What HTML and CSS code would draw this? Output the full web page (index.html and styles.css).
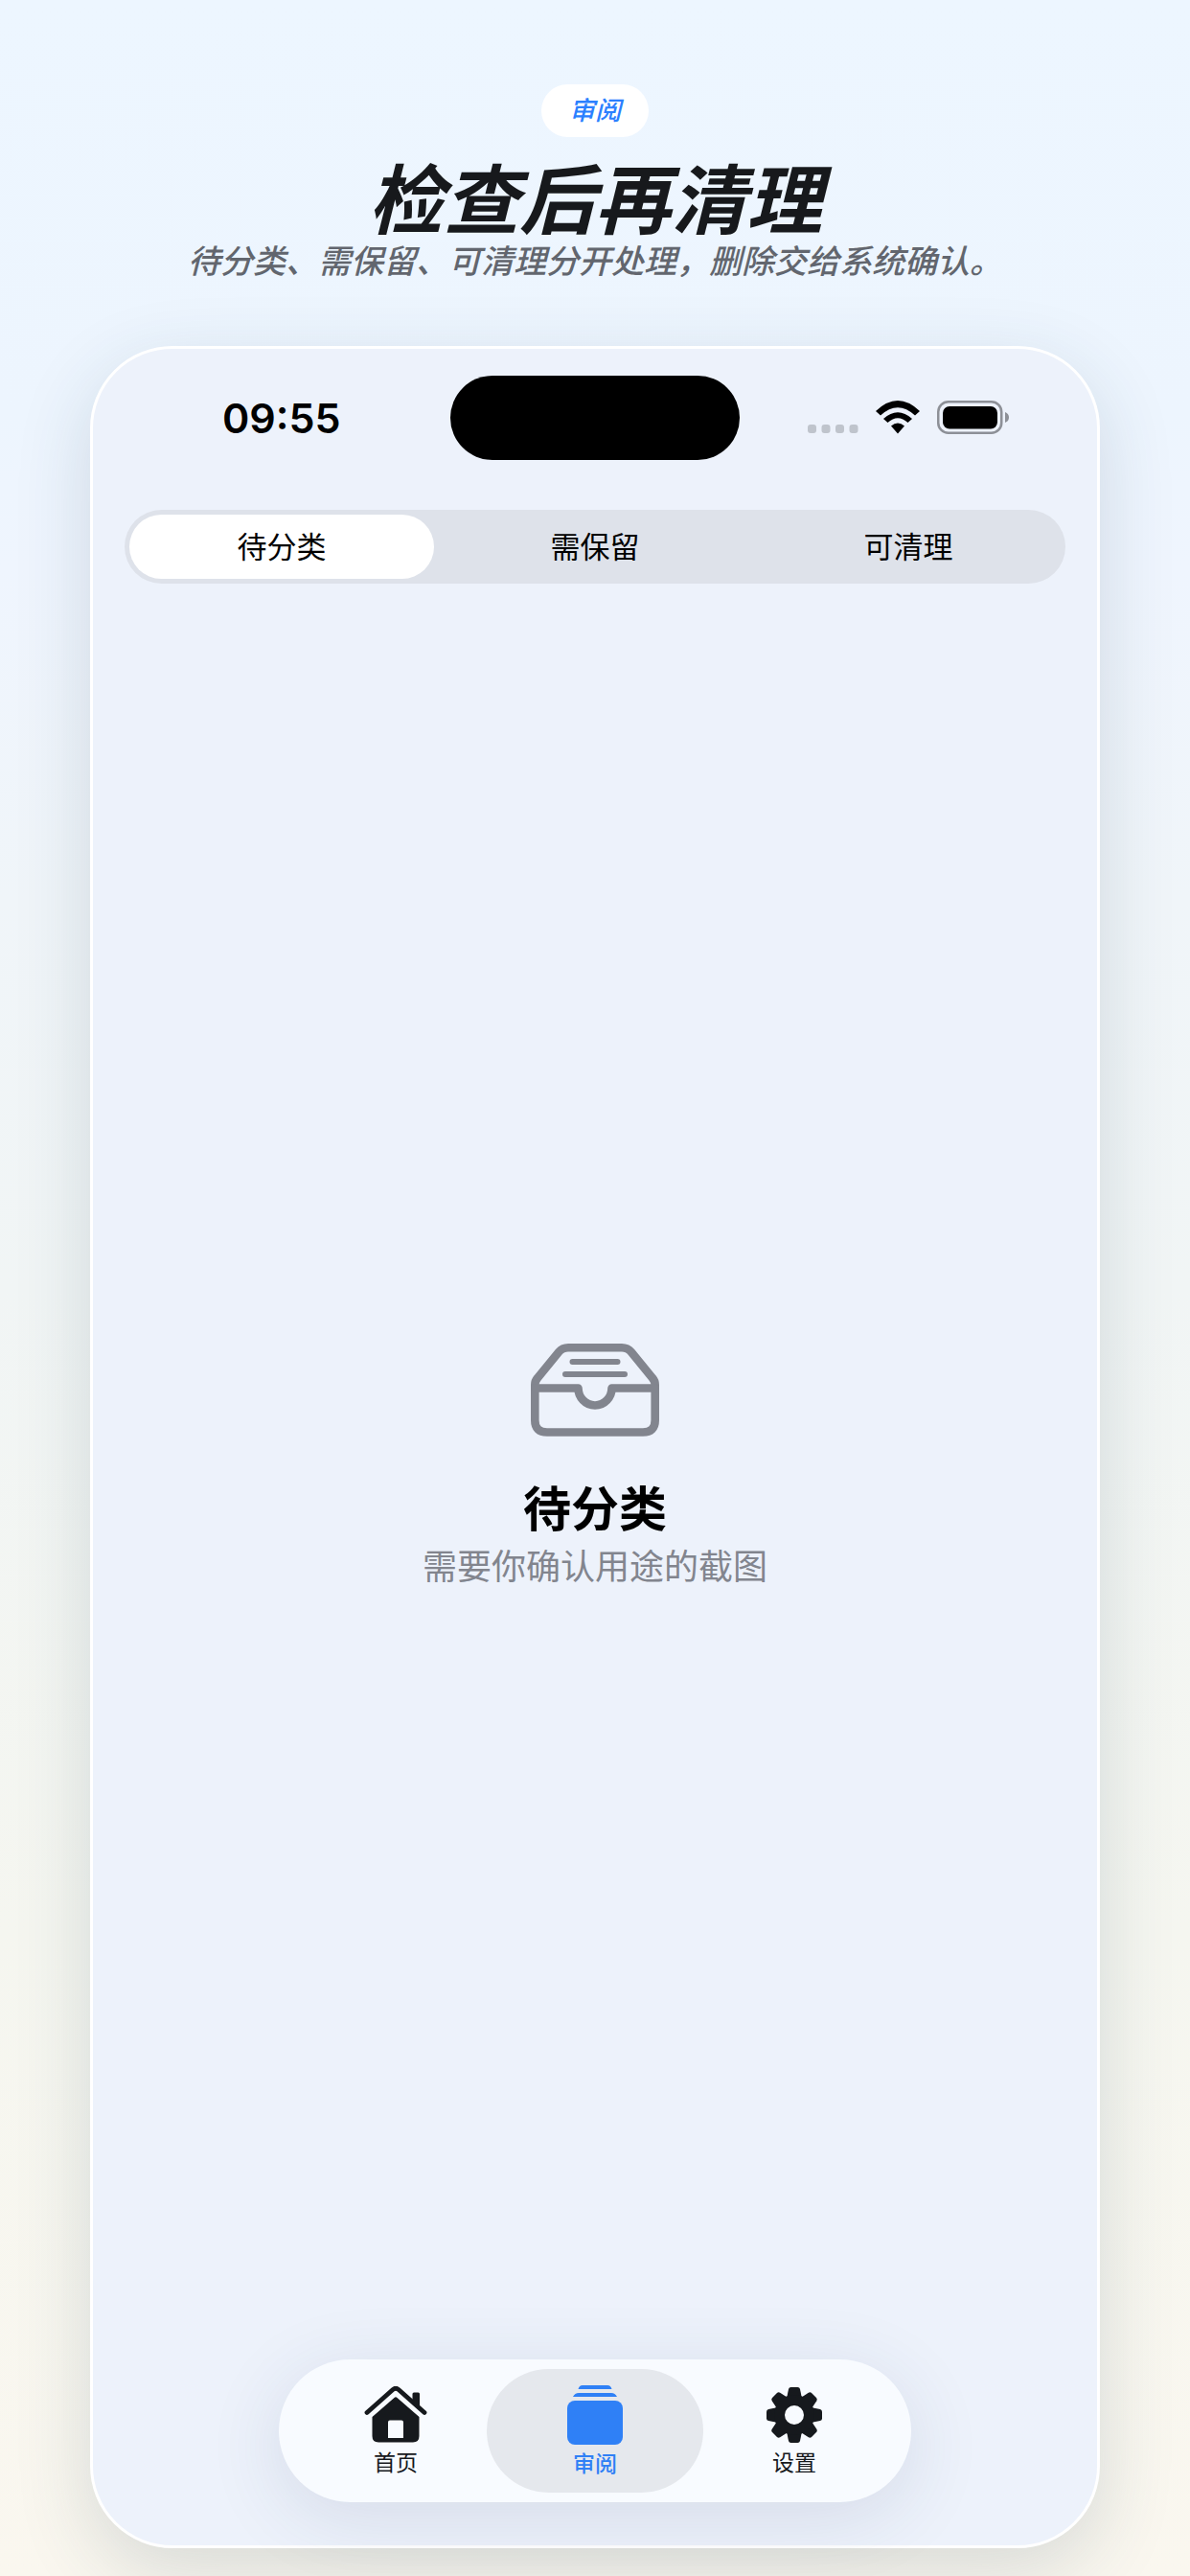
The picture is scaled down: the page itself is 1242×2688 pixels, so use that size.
FILE: index.html
```html
<!DOCTYPE html>
<html lang="zh-CN">
<head>
<meta charset="utf-8">
<title>审阅</title>
<meta name="viewport" content="width=device-width, initial-scale=1">
<link rel="stylesheet" href="styles.css">
</head>
<body>
<main class="page">
  <header class="hero">
    <span class="badge">审阅</span>
    <h1 class="headline">检查后再清理</h1>
    <p class="tagline">待分类、需保留、可清理分开处理，删除交给系统确认。</p>
  </header>
  <section class="phone">
    <div class="status">
      <time class="clock">09:55</time>
      <div class="island"></div>
      <div class="indicators">
        <svg width="54" height="36" viewBox="0 0 54 36" fill="#bfc4cc"><rect y="25" width="9" height="9" rx="3"/><rect x="14.500" y="25" width="9" height="9" rx="3"/><rect x="29" y="25" width="9" height="9" rx="3"/><rect x="43.500" y="25" width="9" height="9" rx="3"/></svg>
        <svg class="wifi" width="46" height="36" viewBox="0 0 46 36"><path d="M0 11Q23-11 46 11L41 15.500Q23-1 5 15.500ZM8 19Q23 5.500 38 19L33.500 23Q23 13.500 12.500 23ZM16 26.500Q23 20.500 30 26.500L23 34.500Z"/></svg>
        <svg width="76" height="36" viewBox="0 0 76 36"><rect x="1.250" y="1.250" width="66" height="32.500" rx="10.500" fill="none" stroke="#8d9097" stroke-width="2.500"/><rect x="6" y="6" width="57" height="23.500" rx="7"/><path d="M71 12Q75 13.500 75 17.500T71 23Z" fill="#8d9097"/></svg>
      </div>
    </div>
    <div class="segments" role="group" aria-label="分类">
      <button class="segment segment-on" type="button">待分类</button>
      <button class="segment" type="button">需保留</button>
      <button class="segment" type="button">可清理</button>
    </div>
    <div class="empty">
      <svg width="134" height="97" viewBox="0 0 134 97" fill="none" stroke="#82858e" stroke-linecap="round" stroke-linejoin="round">
        <path stroke-width="8.600" d="M4.300 43V80Q4.300 92.500 17 92.500H117Q129.700 92.500 129.700 80V43Q129.700 39 127 36L105 9Q101 4.300 95 4.300H39Q33 4.300 29 9L7 36Q4.300 39 4.300 43Z"/>
        <path stroke-width="8.600" d="M5 46.500H49.500C49.500 56 57 64.500 67 64.500S84.500 56 84.500 46.500H129"/>
        <path stroke-width="6" d="M43.500 19H90.500M36 32H98"/>
      </svg>
      <h2 class="empty-title">待分类</h2>
      <p class="empty-text">需要你确认用途的截图</p>
    </div>
    <nav class="tabs" aria-label="主导航">
      <a class="tab" href="#home">
        <svg width="66" height="60" viewBox="0 0 66 60"><path d="M3 27.500L30 3.500Q33 1 36 3.500L63 27.500" fill="none" stroke="#16191d" stroke-width="4.800" stroke-linecap="round"/><path d="M50.500 8Q50.500 6.500 52 6.500H56.500Q58 6.500 58 8V23L50.500 16.500Z" fill="#16191d"/><path fill="#16191d" fill-rule="evenodd" d="M31.500 12Q33 10.500 34.500 12L57.500 32V52Q57.500 58.500 51 58.500H15Q8.500 58.500 8.500 52V32ZM27 35.500Q25 35.500 25 37.500V54H41V37.500Q41 35.500 39 35.500Z"/></svg>
        <span>首页</span>
      </a>
      <a class="tab tab-on" href="#review" aria-current="page">
        <svg width="58" height="62" viewBox="0 0 58 62" fill="#2f80f6"><path d="M11.500 4Q12.500 0 16 0H42Q45.500 0 46.500 4ZM6 12Q8 8 12 8H46Q50 8 52 12Z"/><rect y="16" width="58" height="46" rx="8"/></svg>
        <span>审阅</span>
      </a>
      <a class="tab" href="#settings">
        <svg width="60" height="60" viewBox="-30 -30 60 60" fill="#16191d"><path id="tooth" d="M-8-17L-6-27Q-5.500-29-3.500-29H3.500Q5.500-29 6-27L8-17Z"/><use href="#tooth" transform="rotate(45)"/><use href="#tooth" transform="rotate(90)"/><use href="#tooth" transform="rotate(135)"/><use href="#tooth" transform="rotate(180)"/><use href="#tooth" transform="rotate(225)"/><use href="#tooth" transform="rotate(270)"/><use href="#tooth" transform="rotate(315)"/><circle r="15.500" fill="none" stroke="#16191d" stroke-width="11"/></svg>
        <span>设置</span>
      </a>
    </nav>
  </section>
</main>
</body>
</html>
```
FILE: styles.css
```css
* {
  box-sizing: border-box;
}

body {
  margin: 0;
  font-family: Inter, "Noto Sans CJK SC", sans-serif;
  color: #000;
  background: linear-gradient(#edf6ff, #edf5fe 16%, #eff5fe 22%, #f0f5f9 35%, #f1f5f5 50%, #f5f6f0 75%, #faf7ef);
}

h1, h2, p {
  margin: 0;
}

.page {
  display: flex;
  flex-direction: column;
  min-height: 100vh;
  padding: 88px 94px 29px;
}

.hero {
  display: flex;
  flex-direction: column;
  align-items: center;
  font-style: italic;
}

.badge {
  padding: 0 29px;
  border-radius: 28px;
  background: #fff;
  color: #2b80ff;
  font-size: 27px;
  font-weight: 500;
  line-height: 55px;
}

.headline {
  margin-top: 22px;
  color: #17191c;
  font-size: 79px;
  font-weight: 700;
  line-height: 88px;
}

.tagline {
  color: #62666e;
  font-size: 34px;
  font-weight: 500;
  line-height: 40px;
}

.phone {
  display: flex;
  flex: 1;
  flex-direction: column;
  margin-top: 68px;
  padding: 28px 33px 45px;
  border: 3px solid #fff;
  border-radius: 86px;
  background: #edf2fb;
  box-shadow: 0 24px 80px rgba(40, 70, 90, 0.16);
}

.status {
  display: grid;
  grid-template-columns: 1fr auto 1fr;
  align-items: center;
  height: 88px;
}

.clock {
  padding-left: 102px;
  font-size: 43px;
  font-weight: 600;
}

.island {
  width: 302px;
  height: 88px;
  border-radius: 44px;
  background: #000;
}

.indicators {
  display: flex;
  justify-content: flex-end;
  padding-right: 58px;
}

.wifi {
  margin: 0 18px 0 17px;
}

.segments {
  display: grid;
  grid-template-columns: repeat(3, 1fr);
  gap: 9px;
  margin-top: 52px;
  padding: 5px;
  border-radius: 39px;
  background: #dee2ea;
}

.segment {
  height: 67px;
  padding: 0;
  border: 0;
  border-radius: 34px;
  background: transparent;
  color: #000;
  font: 400 31px/67px Inter, "Noto Sans CJK SC", sans-serif;
}

.segment-on {
  background: #fff;
}

.empty {
  display: flex;
  flex: 1;
  flex-direction: column;
  align-items: center;
  justify-content: center;
  padding-bottom: 10px;
}

.empty-title {
  margin-top: 40px;
  font-size: 50px;
  font-weight: 700;
  line-height: 72px;
}

.empty-text {
  color: #82858e;
  font-size: 36px;
  line-height: 48px;
}

.tabs {
  display: grid;
  grid-template-columns: repeat(3, 208px);
  align-self: center;
  padding: 10px 18px;
  border-radius: 75px;
  background: #f8fbff;
  box-shadow: 0 16px 80px rgba(40, 60, 100, 0.12);
}

.tab {
  display: flex;
  flex-direction: column;
  align-items: center;
  justify-content: center;
  height: 129px;
  padding-top: 6px;
  border-radius: 65px;
  color: #16191d;
  font-size: 23px;
  line-height: 40px;
  text-decoration: none;
}

.tab-on {
  margin: 0 -9px;
  background: #e5e8ed;
  color: #2f80f6;
  font-weight: 500;
}
```
